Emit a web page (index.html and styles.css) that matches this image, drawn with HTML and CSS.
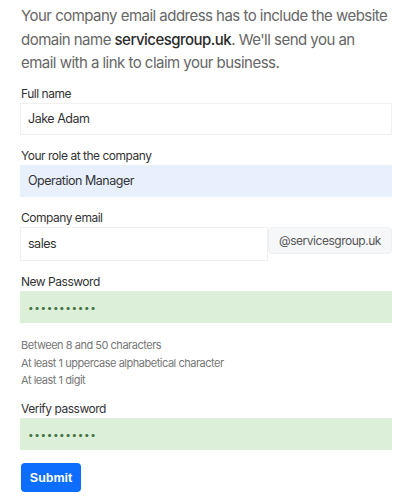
FILE: index.html
```html
<!DOCTYPE html>
<html>
<head>
<meta charset="utf-8">
<link rel="stylesheet" href="styles.css">
</head>
<body>
<div class="page">
  <p class="intro">Your company email address has to include the website domain name <strong>servicesgroup.uk</strong>. We'll send you an email with a link to claim your business.</p>
  <form class="form">
    <div class="field">
      <label class="label">Full name</label>
      <div class="input">Jake Adam</div>
    </div>
    <div class="field">
      <label class="label">Your role at the company</label>
      <div class="input input-blue">Operation Manager</div>
    </div>
    <div class="field">
      <label class="label">Company email</label>
      <div class="group">
        <div class="input input-email">sales</div>
        <div class="addon">@servicesgroup.uk</div>
      </div>
    </div>
    <div class="field">
      <label class="label">New Password</label>
      <div class="input input-green"><span class="dots">•••••••••••</span></div>
    </div>
    <ul class="hints">
      <li>Between 8 and 50 characters</li>
      <li>At least 1 uppercase alphabetical character</li>
      <li>At least 1 digit</li>
    </ul>
    <div class="field">
      <label class="label">Verify password</label>
      <div class="input input-green"><span class="dots">•••••••••••</span></div>
    </div>
    <button type="button" class="submit">Submit</button>
  </form>
</div>
</body>
</html>
```
FILE: styles.css
```css
* { box-sizing: border-box; }
html, body { margin: 0; padding: 0; background: #fff; }
body { font-family: Inter, "Noto Sans", sans-serif; color: #333; letter-spacing: -0.03em; }
.page { padding: 4px 19px 0 21px; }
.intro {
  margin: 0;
  font-size: 15px;
  line-height: 23.5px;
  color: #666;
  font-weight: 400;
  letter-spacing: -0.035em;
}
.intro strong { color: #2b2b2b; font-weight: 500; }
.form { display: flex; flex-direction: column; margin-top: 10px; }
.field { display: flex; flex-direction: column; }
.label {
  font-size: 12px;
  line-height: 18px;
  color: #333;
}
.field + .field { margin-top: 12px; }
.input {
  height: 32px;
  border: 1px solid #f0f0f0;
  background: #fff;
  font-size: 12.5px;
  color: #333;
  display: flex;
  align-items: center;
  padding: 0 7px;
  margin-left: -1px;
}
.input-blue { background: #e8f0fe; border-color: #e8f0fe; }
.input-green { background: #dcefd8; border-color: #dcefd8; }
.dots { color: #467546; font-size: 10px; letter-spacing: 0.6px; }
.group { display: flex; align-items: flex-start; }
.input-email { flex: 1; height: 34px; }
.addon {
  height: 27px;
  width: 124px;
  background: #f6f7f9;
  border: 1px solid #eef0f2;
  border-radius: 4px;
  font-size: 12px;
  color: #555;
  display: flex;
  align-items: center;
  justify-content: center;
}
.hints {
  list-style: none;
  padding: 0;
  margin: 14.5px 0 10.5px;
  font-size: 11px;
  line-height: 17.5px;
  color: #777;
}
.submit {
  align-self: flex-start;
  margin-top: 13px;
  width: 60px;
  height: 29px;
  background: #0d6efd;
  border: 0;
  border-radius: 4px;
  color: #fff;
  font-family: "Liberation Sans", Arial, sans-serif;
  font-weight: 700;
  font-size: 12.5px;
  letter-spacing: 0;
  padding: 0;
}
```
